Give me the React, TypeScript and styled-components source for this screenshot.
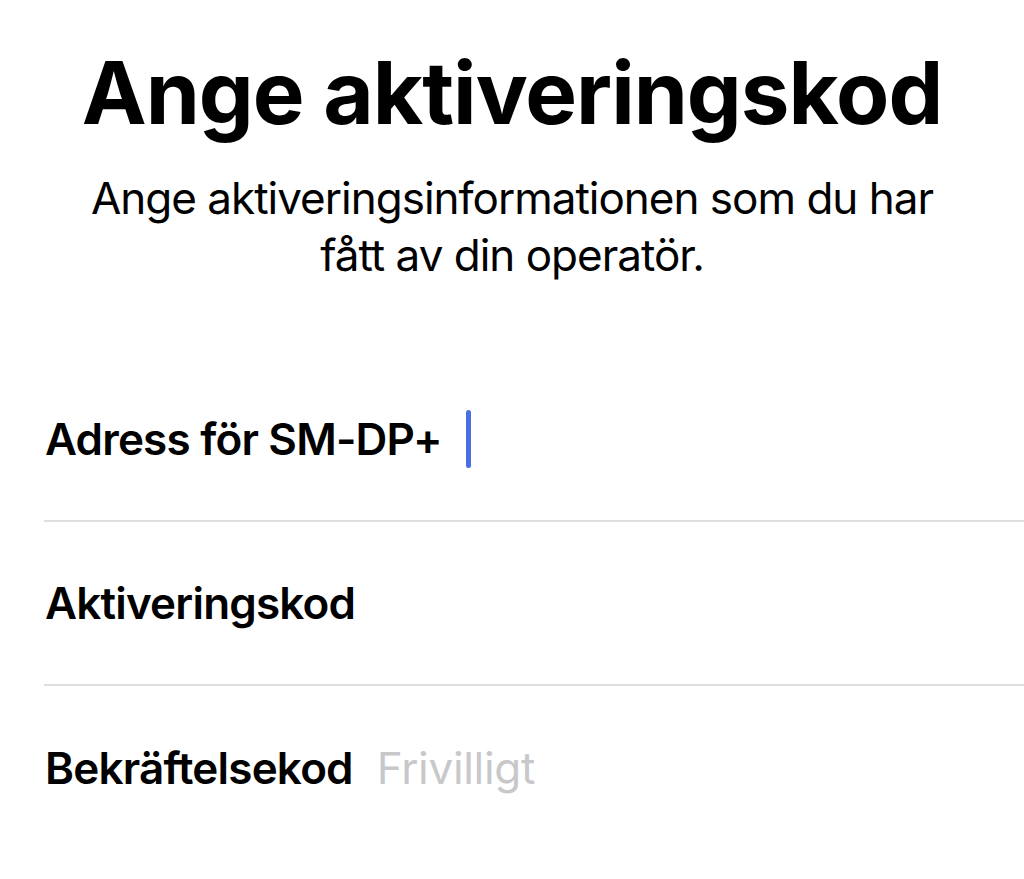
import React from "react";
import styled, { createGlobalStyle } from "styled-components";

const GlobalStyle = createGlobalStyle`
  html, body {
    margin: 0;
    padding: 0;
    background: #ffffff;
  }
  body {
    font-family: Inter, "Noto Sans", "Liberation Sans", sans-serif;
    color: #000000;
    -webkit-font-smoothing: antialiased;
  }
`;

const Screen = styled.main`
  width: 1024px;
  height: 879px;
  overflow: hidden;
  background: #ffffff;
  display: flex;
  flex-direction: column;
  padding-top: 41px;
  box-sizing: border-box;
`;

const Title = styled.h1`
  margin: 0;
  text-align: center;
  font-size: 87px;
  line-height: 104px;
  font-weight: 700;
  letter-spacing: -1px;
`;

const Subtitle = styled.p`
  margin: 25px auto 0;
  width: 870px;
  text-align: center;
  font-size: 44px;
  line-height: 57px;
  font-weight: 400;
  letter-spacing: -1px;
`;

const Form = styled.div`
  margin-top: 74px;
  padding-left: 44px;
  display: flex;
  flex-direction: column;
`;

const Row = styled.label<{ $divider?: boolean }>`
  height: 164px;
  display: flex;
  align-items: center;
  gap: 24px;
  border-bottom: ${(p) => (p.$divider ? "2px solid #dedede" : "none")};
  box-sizing: border-box;
  padding-left: 1px;
`;

const Label = styled.span`
  font-size: 44px;
  font-weight: 600;
  letter-spacing: -0.8px;
`;

const Placeholder = styled.span`
  font-size: 44px;
  font-weight: 400;
  color: #c8c8cb;
  letter-spacing: -0.3px;
`;

const Caret = styled.span`
  width: 5px;
  height: 58px;
  border-radius: 3px;
  background: #4a6fe3;
`;

export default function App() {
  return (
    <>
      <GlobalStyle />
      <Screen>
        <Title>Ange aktiveringskod</Title>
        <Subtitle>
          Ange aktiveringsinformationen som du har fått av din operatör.
        </Subtitle>
        <Form>
          <Row $divider>
            <Label>Adress för SM-DP+</Label>
            <Caret />
          </Row>
          <Row $divider>
            <Label>Aktiveringskod</Label>
          </Row>
          <Row>
            <Label>Bekräftelsekod</Label>
            <Placeholder>Frivilligt</Placeholder>
          </Row>
        </Form>
      </Screen>
    </>
  );
}
